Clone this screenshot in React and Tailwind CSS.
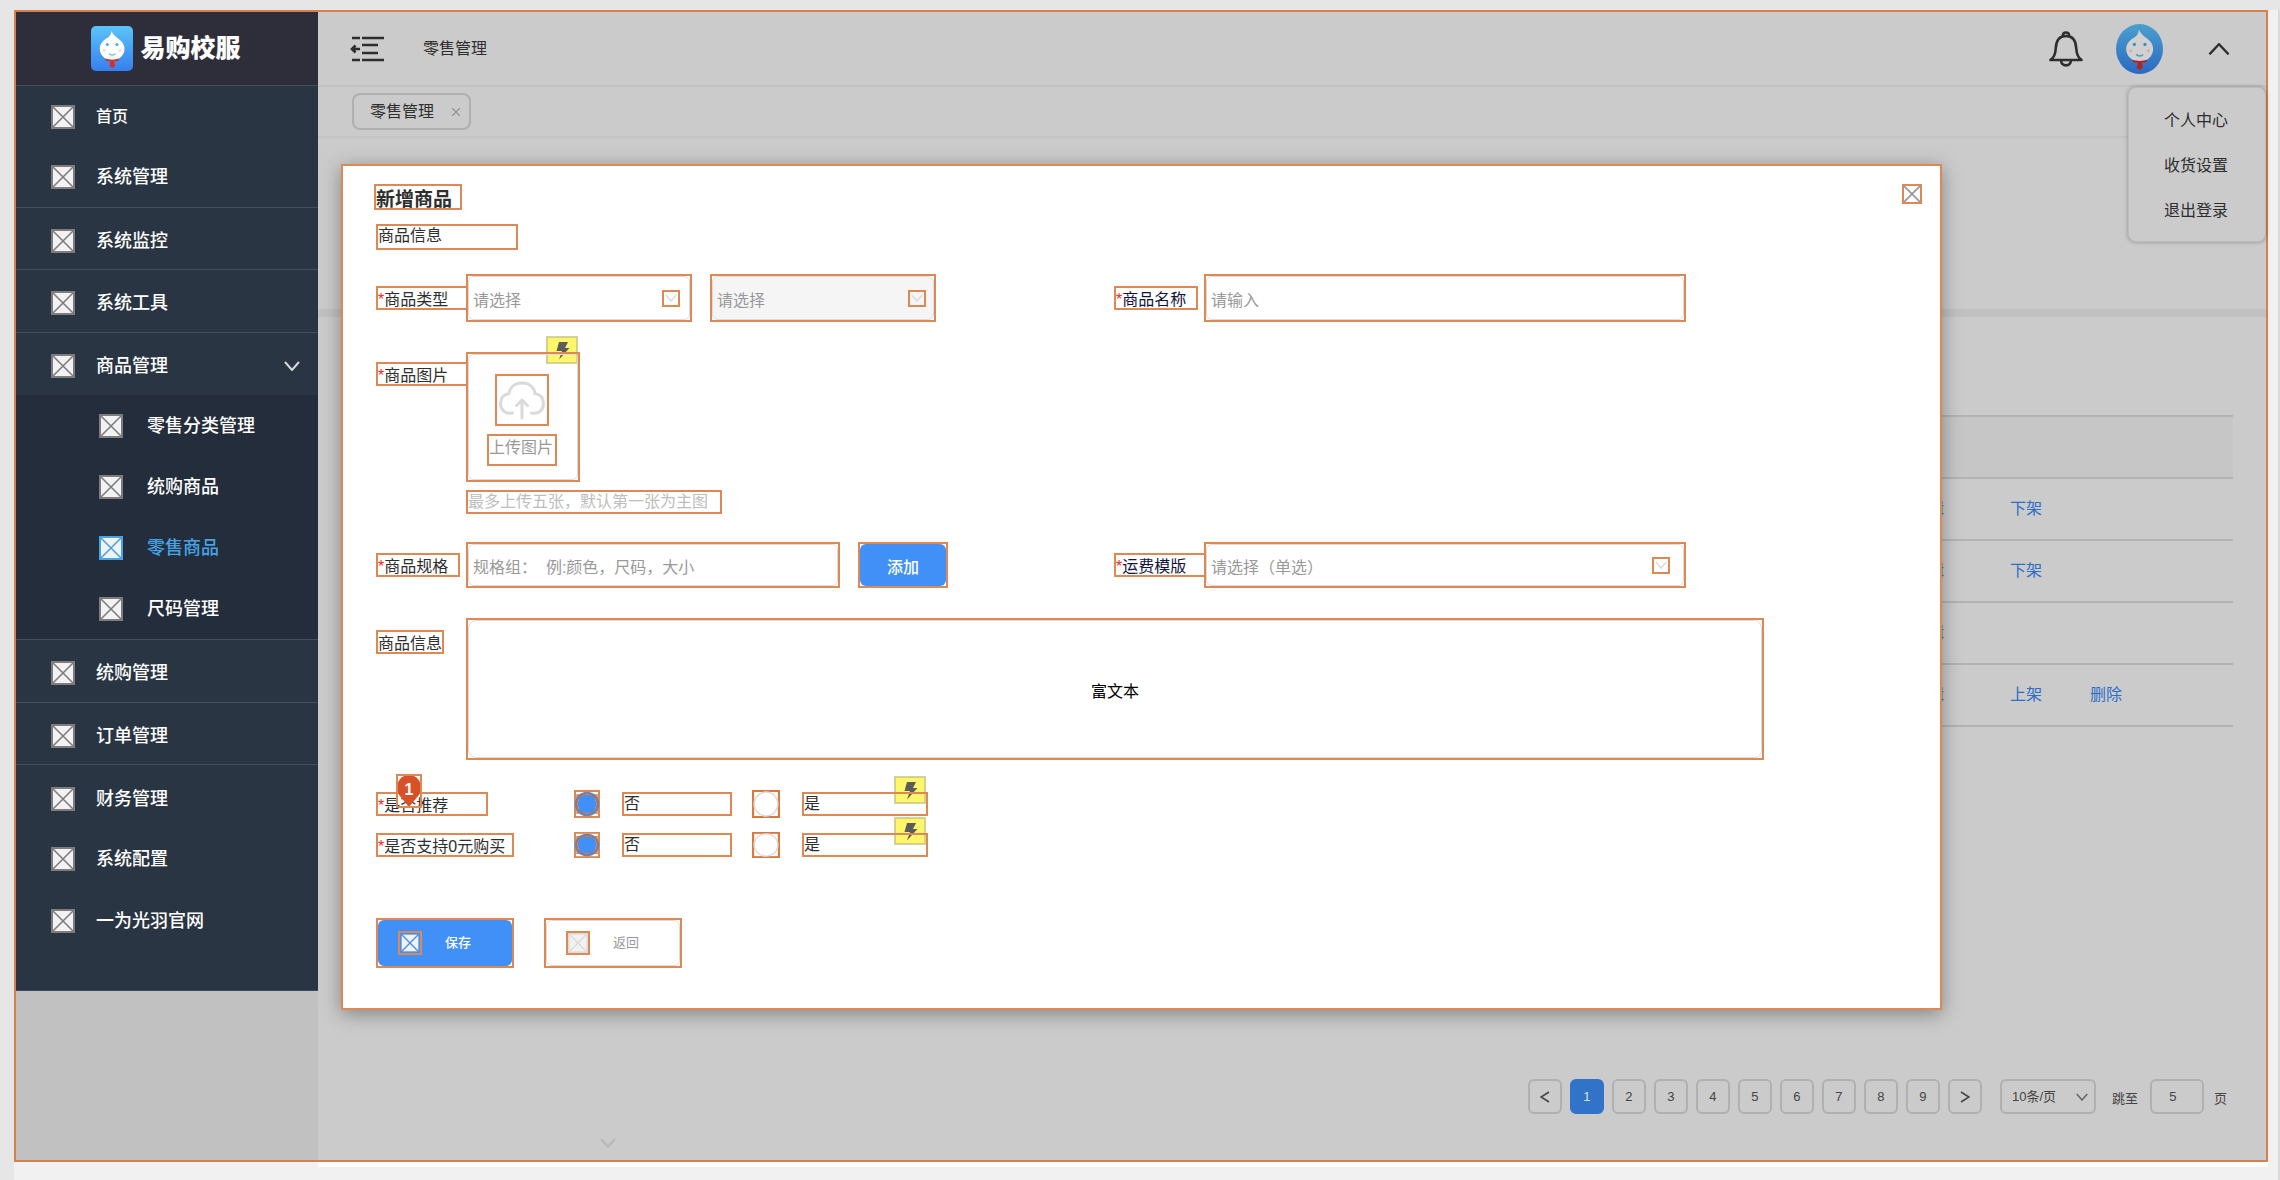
import React from "react";

const FONT = "font-['Liberation_Sans','Noto_Sans_CJK_SC',sans-serif]";

function Placeholder({ className = "size-6 text-[#7d7d7d]" }) {
  return (
    <svg viewBox="0 0 24 24" preserveAspectRatio="none" className={`shrink-0 ${className}`} aria-hidden="true">
      <rect x="1" y="1" width="22" height="22" fill="#f2f2f2" stroke="currentColor" strokeWidth="2" />
      <path d="M1 1L23 23M23 1L1 23" stroke="currentColor" strokeWidth="1.6" />
    </svg>
  );
}

function Chevron({ className, d = "M1 1L8 9L15 1", width = 2 }) {
  return (
    <svg viewBox="0 0 16 10" fill="none" stroke="currentColor" strokeWidth={width} className={className} aria-hidden="true">
      <path d={d} />
    </svg>
  );
}

/* The onion-headed boy with a red scarf */
function Mascot() {
  return (
    <g>
      <path d="M20.5 5C21.5 8 24.5 10.5 28 13.2C32 16.2 33.5 19.5 33.5 22.8C33.5 29.5 28 34.4 21.2 34.4C14.4 34.4 8.8 29.5 8.8 22.8C8.8 18.6 11.4 15 15.4 12.6C18.6 10.8 20 8.6 20.5 5Z" fill="#fff" />
      <circle cx="16.3" cy="18.6" r="1.5" fill="#49aee8" />
      <circle cx="26" cy="18.6" r="1.5" fill="#49aee8" />
      <circle cx="13" cy="24.4" r="1.4" fill="#f9d5dc" />
      <circle cx="29" cy="24.4" r="1.4" fill="#f9d5dc" />
      <path d="M18 27.6C19.6 29.6 23 29.6 24.4 27.6" stroke="#5cbcef" strokeWidth="1.3" fill="none" />
      <path d="M14.4 32.6C18.4 34 24 34 28 32.6L27.4 35L23 35.2L24 40L21.2 42L18.4 40L19.6 35.2L15 35Z" fill="#e0291f" />
    </g>
  );
}

function Logo() {
  return (
    <svg viewBox="0 0 42 45" className="h-[45px] w-[42px]" aria-hidden="true">
      <defs>
        <linearGradient id="logo" x1="0" y1="0" x2="0" y2="1">
          <stop offset="0" stopColor="#5cc3fa" />
          <stop offset="1" stopColor="#3580ee" />
        </linearGradient>
      </defs>
      <rect width="42" height="45" rx="5" fill="url(#logo)" />
      <Mascot />
    </svg>
  );
}

function Avatar() {
  return (
    <svg viewBox="0 0 47 50" className="h-[50px] w-[47px]" aria-hidden="true">
      <defs>
        <linearGradient id="avatar" x1="0" y1="0" x2="0" y2="1">
          <stop offset="0" stopColor="#5cc3fa" />
          <stop offset="1" stopColor="#3580ee" />
        </linearGradient>
      </defs>
      <ellipse cx="23.5" cy="25" rx="23.5" ry="25" fill="url(#avatar)" />
      <g transform="translate(0.6 0.2) scale(1.09)">
        <Mascot />
      </g>
      <ellipse cx="23.5" cy="25" rx="23.5" ry="25" fill="#000" opacity="0.18" />
    </svg>
  );
}

function Bolt({ className }) {
  return (
    <svg viewBox="0 0 32 28" className={`absolute h-7 w-8 ${className}`} aria-hidden="true">
      <rect x="0.5" y="0.5" width="31" height="27" fill="#fff66b" stroke="#cfcfc0" />
      <rect x="1.5" y="1.5" width="29" height="25" fill="none" stroke="#d9d25c" />
      <path d="M13 6H22L19 12H23.5L13 23.5L16 15H10.5Z" fill="#5c5c5c" />
    </svg>
  );
}

const line = "border-t border-[#434f5f] pt-1";
const menu = [
  { label: "首页", row: "h-[61px]", size: "text-base" },
  { label: "系统管理", row: "h-[60px]" },
  { label: "系统监控", row: `h-[62px] ${line}` },
  { label: "系统工具", row: `h-[63px] ${line}` },
  {
    label: "商品管理",
    row: `h-[63px] ${line}`,
    children: [
      { label: "零售分类管理" },
      { label: "统购商品" },
      { label: "零售商品", active: true },
      { label: "尺码管理" },
    ],
  },
  { label: "统购管理", row: `h-[63px] ${line}` },
  { label: "订单管理", row: `h-[62px] ${line}` },
  { label: "财务管理", row: `h-[64px] ${line}` },
  { label: "系统配置", row: "h-[62px]" },
  { label: "一为光羽官网", row: "h-[62px]" },
];

function Sidebar() {
  return (
    <aside className="flex w-[302px] shrink-0 flex-col bg-[#c1c1c1]">
      <div className="flex h-[73px] items-center justify-center gap-[7px] bg-[#2d2e39] pr-0.5">
        <Logo />
        <span className="text-[25px] font-black text-white">易购校服</span>
      </div>
      <nav className="border-t border-[#434f5f] border-b border-b-[#3c4a63] bg-[#293543] pb-[38px] font-medium text-white">
        <ul>
          {menu.map((item) => (
            <li key={item.label}>
              <a href="#" className={`flex items-center gap-[21px] pr-[18px] pl-[35px] ${item.row}`}>
                <Placeholder />
                <span className={item.size || "text-lg"}>{item.label}</span>
                {item.children && <Chevron className="ml-auto h-[10px] w-4 text-[#d5d8dc]" />}
              </a>
              {item.children && (
                <ul className="bg-[#232d3b]">
                  {item.children.map((sub) => (
                    <li key={sub.label}>
                      <a href="#" className={`flex h-[61px] items-center gap-6 pl-[83px] text-lg ${sub.active ? "text-[#48a3e6]" : ""}`}>
                        <Placeholder className={sub.active ? "size-6 text-[#48a3e6]" : "size-6 text-[#7d7d7d]"} />
                        {sub.label}
                      </a>
                    </li>
                  ))}
                </ul>
              )}
            </li>
          ))}
        </ul>
      </nav>
    </aside>
  );
}

function Header() {
  return (
    <header className="flex h-[75px] items-center border-b-2 border-[#c2c2c2] pr-9 pl-8">
      <button type="button" aria-label="收起菜单">
        <svg viewBox="0 0 34 26" className="h-[26px] w-[34px]" fill="none" stroke="#2e2e2e" strokeWidth="2.6" aria-hidden="true">
          <path d="M2 2H10M12 2H34M12 9H28M12 17H28M2 24H10M12 24H34" />
          <path d="M3 13H10M5.5 9.5L2 13L5.5 16.5" />
        </svg>
      </button>
      <h1 className="ml-[39px] text-base">零售管理</h1>
      <div className="ml-auto flex items-center">
        <button type="button" aria-label="通知">
          <svg viewBox="0 0 34 36" className="h-9 w-[34px]" fill="none" stroke="#2e2e2e" strokeWidth="2.6" strokeLinejoin="round" aria-hidden="true">
            <path d="M1.5 29H32.5C29 27 27.6 23 27.2 17C26.8 9 23.5 5 17 5C10.5 5 7.2 9 6.8 17C6.4 23 5 27 1.5 29Z" />
            <path d="M14 5.5C13.5 2.5 15 1.5 17 1.5C19 1.5 20.5 2.5 20 5.5M12 29C12 36.2 22 36.2 22 29" />
          </svg>
        </button>
        <span className="ml-[33px]">
          <Avatar />
        </span>
        <button type="button" aria-label="收起账户菜单" className="ml-[45px]">
          <Chevron className="h-3 w-[22px] text-[#2e2e2e]" d="M0 9.5L8 1L16 9.5" width={1.9} />
        </button>
      </div>
    </header>
  );
}

function ProductTable() {
  const rows = [
    ["编辑", "下架"],
    ["编辑", "下架"],
    ["编辑"],
    ["编辑", "上架", "删除"],
  ];
  return (
    <table className="mt-[98px] mr-[33px] ml-6 table-fixed border-collapse text-base text-[#2d6fc6]">
      <colgroup>
        <col />
        <col className="w-[321px]" />
      </colgroup>
      <thead>
        <tr className="h-[62px] border-y-2 border-[#b3b3b3] bg-[#c6c6c6]">
          <th />
          <th />
        </tr>
      </thead>
      <tbody>
        {rows.map((actions, i) => (
          <tr key={i} className="h-[62px] border-b-2 border-[#b3b3b3]">
            <td />
            <td>
              <div className="flex">
                {actions.map((action, j) => (
                  <a key={action} href="#" className={j === 0 ? "w-[98px]" : "w-20"}>
                    {action}
                  </a>
                ))}
              </div>
            </td>
          </tr>
        ))}
      </tbody>
    </table>
  );
}

const pageBox = "flex h-[35px] w-[34px] items-center justify-center rounded-md border-2";

function Pagination() {
  return (
    <nav className="flex items-center justify-end gap-2 pr-[39px] text-[13px] text-[#444]" aria-label="分页">
      <button type="button" aria-label="上一页" className={`${pageBox} border-[#b0b0b0]`}>
        <svg viewBox="0 0 10 12" className="h-3 w-[10px]" fill="none" stroke="#444" strokeWidth="1.6" aria-hidden="true">
          <path d="M9 1L1 6L9 11" />
        </svg>
      </button>
      {[1, 2, 3, 4, 5, 6, 7, 8, 9].map((n) => (
        <button key={n} type="button" className={`${pageBox} ${n === 1 ? "border-[#3173c9] bg-[#3173c9] text-[#d8e4f4]" : "border-[#b0b0b0]"}`}>
          {n}
        </button>
      ))}
      <button type="button" aria-label="下一页" className={`${pageBox} border-[#b0b0b0]`}>
        <svg viewBox="0 0 10 12" className="h-3 w-[10px]" fill="none" stroke="#444" strokeWidth="1.6" aria-hidden="true">
          <path d="M1 1L9 6L1 11" />
        </svg>
      </button>
      <div className="relative ml-2.5">
        <select aria-label="每页条数" className="h-[35px] w-24 appearance-none rounded-md border-2 border-[#b0b0b0] pl-[10px]">
          <option>10条/页</option>
        </select>
        <Chevron className="pointer-events-none absolute top-[14px] right-2 h-2 w-3 text-[#666]" />
      </div>
      <label htmlFor="jump" className="ml-2 pt-1">跳至</label>
      <input id="jump" defaultValue="5" className="ml-1 h-[35px] w-[54px] rounded-md border-2 border-[#b0b0b0] pr-2 text-center" />
      <span className="ml-0.5 pt-1">页</span>
    </nav>
  );
}

function Box({ className = "", children }) {
  return <div className={`border-2 border-[#dc8956] ${className}`}>{children}</div>;
}

function FieldLabel({ htmlFor, required = true, className = "w-[84px]", children }) {
  return (
    <label htmlFor={htmlFor} className={`block h-6 shrink-0 border-2 border-[#dc8956] text-base/6 whitespace-nowrap ${className}`}>
      {required && <span className="text-[#f5281e]">*</span>}
      {children}
    </label>
  );
}

function ArrowBox({ className = "" }) {
  return (
    <span className={`pointer-events-none absolute flex h-[17px] w-[18px] items-center justify-center border-2 border-[#dc8956] ${className}`}>
      <Chevron className="h-2 w-3 text-[#dcdcdc]" />
    </span>
  );
}

function SelectField({ id, text, label, disabled, className, arrow = "right-2.5" }) {
  return (
    <div className={`relative flex items-center border-2 border-[#dc8956] ${className}`}>
      <select
        id={id}
        aria-label={label}
        disabled={disabled}
        className={`h-full w-full appearance-none rounded-md border border-[#dcdcdc] pt-1.5 pl-1 text-base text-[#999] opacity-100 ${disabled ? "bg-[#f5f5f5]" : "bg-white"}`}
      >
        <option>{text}</option>
      </select>
      <ArrowBox className={arrow} />
    </div>
  );
}

function TextField({ id, placeholder, className }) {
  return (
    <Box className={className}>
      <input
        id={id}
        placeholder={placeholder}
        className="h-full w-full rounded-md border border-[#dcdcdc] pt-1.5 pl-1 text-base placeholder:text-[#999]"
      />
    </Box>
  );
}

function Radio({ id, name, checked, className = "" }) {
  return (
    <span className={`relative shrink-0 ${className}`}>
      <input id={id} type="radio" name={name} defaultChecked={checked} className="absolute inset-0 size-full appearance-none" />
      <svg viewBox="0 0 26 28" preserveAspectRatio="none" className="pointer-events-none relative size-full" fill="none" aria-hidden="true">
        {checked ? (
          <>
            <rect x="1" y="1" width="24" height="26" stroke="#dc8956" strokeWidth="2" />
            <rect x="3" y="5" width="20" height="18" stroke="#dc8956" strokeWidth="1.6" />
            <circle cx="13" cy="14" r="11.5" stroke="#4190f7" strokeWidth="1.5" />
            <rect x="4" y="5" width="18" height="18" rx="7" fill="#4190f7" />
            <circle cx="13" cy="14" r="10.5" stroke="#a8705c" strokeWidth="1.6" />
          </>
        ) : (
          <>
            <rect x="1" y="1" width="24" height="26" stroke="#d9783f" strokeWidth="2" />
            <ellipse cx="13" cy="14" rx="11" ry="12" stroke="#dcdcdc" strokeWidth="1.5" />
          </>
        )}
      </svg>
    </span>
  );
}

function RadioRow({ name, legend, legendWidth, row, pin }) {
  return (
    <div role="radiogroup" aria-label={legend} className={`flex items-center ${row}`}>
      <div className="relative w-[198px] shrink-0">
        <div className={`h-6 border-2 border-[#dc8956] text-base/6 whitespace-nowrap ${legendWidth}`}>
          <span className="text-[#f5281e]">*</span>
          {legend}
        </div>
        {pin && (
          <span className="absolute -top-[18px] left-5 flex h-[34px] w-[26px] justify-center">
            <svg viewBox="0 0 26 34" className="absolute inset-0 size-full" aria-hidden="true">
              <path d="M13 33L3.5 21.5C-1 14 0.5 2 13 1C25.500 2 27 14 22.500 21.500Z" fill="#d65128" />
              <rect x="1" y="1" width="24" height="32" fill="none" stroke="#dc8956" strokeWidth="2" />
            </svg>
            <span className="relative text-base/8 font-bold text-white">1</span>
          </span>
        )}
      </div>
      <Radio id={`${name}-no`} name={name} checked className="h-full w-[26px]" />
      <label htmlFor={`${name}-no`} className="ml-[22px] h-6 w-[110px] border-2 border-[#dc8956] text-base/5">
        否
      </label>
      <Radio id={`${name}-yes`} name={name} className="ml-5 h-full w-7" />
      <div className="relative ml-[22px] h-6 w-[126px]">
        <Bolt className="-top-4 right-0.5" />
        <label htmlFor={`${name}-yes`} className="relative block h-6 border-2 border-[#dc8956] text-base/5">
          是
        </label>
      </div>
    </div>
  );
}

function ProductModal() {
  return (
    <section
      role="dialog"
      aria-labelledby="modal-title"
      className="absolute top-[152px] right-[324px] left-[325px] border-2 border-[#dc8956] bg-white pt-[18px] pb-10 pl-[31px] shadow-[0_4px_18px_rgba(0,0,0,0.35)]"
    >
      <div className="flex items-start justify-between pr-[18px]">
        <h2 id="modal-title" className="h-[26px] w-[88px] border-2 border-[#dc8956] text-[19px]/7 font-bold">
          新增商品
        </h2>
        <button type="button" aria-label="关闭" className="h-5 w-5 border-2 border-[#dc8956]">
          <svg viewBox="0 0 16 16" className="size-4" stroke="#9a9a9a" strokeWidth="1.8" aria-hidden="true">
            <path d="M0 0L16 16M16 0L0 16" />
          </svg>
        </button>
      </div>

      <form className="pt-[14px] pl-0.5">
        <Box className="h-[26px] w-[142px] text-base/5">商品信息</Box>
        <div className="mt-6 grid grid-cols-[738px_1fr]">
          <div className="flex items-center">
            <FieldLabel htmlFor="type" className="w-[90px] border-r-0">商品类型</FieldLabel>
            <SelectField id="type" text="请选择" className="h-12 w-[226px]" />
            <SelectField text="请选择" label="商品子类型" disabled className="ml-[18px] h-12 w-[226px]" arrow="right-2" />
          </div>
          <div className="mr-[254px] flex items-center gap-1.5 text-[#12123c]">
            <FieldLabel htmlFor="name">商品名称</FieldLabel>
            <TextField id="name" placeholder="请输入" className="h-12 flex-1" />
          </div>
        </div>

        <div className="mt-[30px] flex items-start">
          <FieldLabel htmlFor="photo" className="mt-2.5 w-[90px] border-r-0">商品图片</FieldLabel>
          <div>
            <div className="relative w-[114px]">
              <Bolt className="-top-4 right-0.5" />
              <Box className="relative h-[130px]">
                <button id="photo" type="button" className="flex h-full w-full flex-col items-center gap-2 rounded-md border border-[#dcdcdc] pt-[19px] pr-0.5 text-base/6 text-[#999]">
                  <Box className="h-[52px] w-[54px]">
                    <svg viewBox="0 0 50 48" className="h-12 w-[50px]" fill="none" stroke="#dadada" strokeWidth="3" strokeLinecap="round" aria-hidden="true">
                      <path d="M15.5 37C8 38.5 3.5 33.5 3.5 27.5C3.5 22 7 18.5 12 17.5C13 11 18 7 25 7C32 7 37 11 38 17.5C43 18.5 46.5 22 46.5 27.5C46.5 33.5 42 38.5 34.5 37" />
                      <path d="M25 42V25M19.5 29.5L25 24L30.5 29.5" strokeLinejoin="round" />
                    </svg>
                  </Box>
                  <Box className="h-8 w-[70px] text-left whitespace-nowrap">上传图片</Box>
                </button>
              </Box>
            </div>
            <Box className="mt-2 h-6 w-64 text-base/5 whitespace-nowrap text-[#bdbdbd]">最多上传五张，默认第一张为主图</Box>
          </div>
        </div>

        <div className="mt-7 grid grid-cols-[738px_1fr]">
          <div className="flex items-center">
            <FieldLabel htmlFor="spec" className="mr-1.5 w-[84px]">商品规格</FieldLabel>
            <TextField id="spec" placeholder="规格组：&nbsp; 例:颜色，尺码，大小" className="h-[46px] w-[374px]" />
            <Box className="ml-[18px] h-[46px] w-[90px]">
              <button type="button" className="h-full w-full rounded-md bg-[#4190f7] pt-1.5 text-base font-medium text-white">
                添加
              </button>
            </Box>
          </div>
          <div className="mr-[254px] flex items-center text-[#12123c]">
            <FieldLabel htmlFor="freight" className="w-[90px] border-r-0">运费模版</FieldLabel>
            <SelectField id="freight" text="请选择（单选）" className="h-[46px] flex-1" arrow="right-3.5" />
          </div>
        </div>

        <div className="mt-[30px] mr-44 flex items-start">
          <FieldLabel htmlFor="detail" required={false} className="mt-3 mr-[22px] w-[68px]">商品信息</FieldLabel>
          <Box className="h-[142px] flex-1">
            <div id="detail" className="flex h-full items-center justify-center rounded-lg border border-[#dcdcdc] pt-1.5 text-base text-black">
              富文本
            </div>
          </Box>
        </div>

        <RadioRow name="recommend" legend="是否推荐" legendWidth="w-28" row="mt-[30px] h-7" pin />
        <RadioRow name="free" legend="是否支持0元购买" legendWidth="w-[138px]" row="mt-3.5 h-[26px]" />

        <div className="mt-[60px] flex gap-[30px]">
          <Box className="h-[50px] w-[138px]">
            <button type="button" className="flex h-full w-full items-center gap-[23px] rounded-md bg-[#4190f7] pl-5 text-[13px] font-medium text-white">
              <Box>
                <Placeholder className="size-5 text-[#4190f7]" />
              </Box>
              保存
            </button>
          </Box>
          <Box className="h-[50px] w-[138px]">
            <button type="button" className="flex h-full w-full items-center gap-[23px] rounded-md border border-[#dcdcdc] pl-[19px] text-[13px] text-[#999]">
              <Box>
                <Placeholder className="size-5 text-[#dcdcdc]" />
              </Box>
              返回
            </button>
          </Box>
        </div>
      </form>
    </section>
  );
}

export default function App() {
  return (
    <div className={`flex min-h-screen flex-col bg-[#e6e6e6] pt-[10px] pl-[14px] text-[#2e2e2e] ${FONT}`}>
      <div className="flex flex-1 flex-col border-r-2 border-[#dadada] bg-[#f1f1f1] pr-[10px] pb-[13px]">
        <div className="relative flex flex-1 border-2 border-[#d5804d] bg-[#cbcbcb]">
          <Sidebar />
          <main className="flex min-w-0 flex-1 flex-col">
            <Header />
            <div className="flex h-[51px] items-center border-b-2 border-[#c4c4c4] pl-[34px]">
              <div className="flex h-[37px] w-[119px] items-center gap-[18px] rounded-lg border-2 border-[#b0b0b0] pl-4 text-base">
                零售管理
                <button type="button" aria-label="关闭标签">
                  <svg viewBox="0 0 8 8" className="size-2" stroke="#8f8f8f" strokeWidth="1.2" aria-hidden="true">
                    <path d="M0 0L8 8M8 0L0 8" />
                  </svg>
                </button>
              </div>
            </div>
            <div className="mt-[171px] h-2 bg-[#c1c1c1]" />
            <ProductTable />
            <div className="mt-auto">
              <Pagination />
              <Chevron className="mt-6 mb-3 ml-[282px] h-[10px] w-4 text-[#b8b8b8]" />
            </div>
          </main>
          <div className="absolute top-[75px] right-0 w-[138px] rounded-lg border border-[#bdbdbd] bg-[#cbcbcb] pt-2.5 pb-2 pl-[35px] text-base shadow-[0_0_4px_rgba(0,0,0,0.3)]">
            {["个人中心", "收货设置", "退出登录"].map((item) => (
              <a key={item} href="#" className="flex h-[45px] items-center">
                {item}
              </a>
            ))}
          </div>
          <ProductModal />
        </div>
        <div className="ml-[304px] h-[5px] bg-white" />
      </div>
    </div>
  );
}
